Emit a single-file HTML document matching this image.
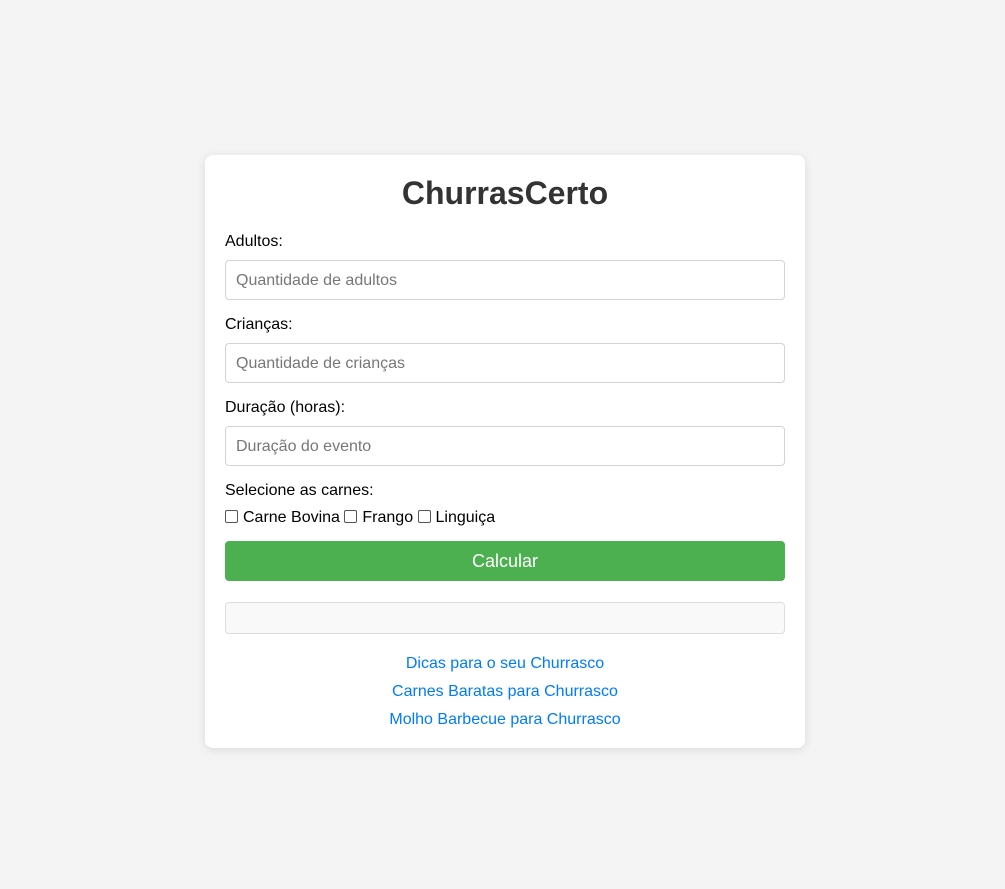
<!DOCTYPE html>
<html><head><meta charset="utf-8"><style>
body{margin:0;background:#f4f4f4;font-family:"Liberation Sans",Arial,sans-serif;width:1005px;height:889px;position:relative}
.card{position:absolute;left:205px;top:155px;width:600px;height:593px;background:#fff;border-radius:8px;box-shadow:0 2px 10px rgba(0,0,0,0.1)}
.a{position:absolute;left:20px;line-height:20px;font-size:16px;color:#000;white-space:nowrap}
h1{position:absolute;left:0;right:0;top:18px;margin:0;text-align:center;font-size:32px;line-height:40px;color:#333}
.in{position:absolute;left:20px;width:558px;height:38px;border:1px solid #d3d3d3;border-radius:4px;box-sizing:content-box;font-size:16px;color:#777;line-height:40px;text-indent:10px}
.cb{display:inline-block;width:11px;height:11px;border:1px solid #555;border-radius:2px;vertical-align:-1px;margin:0 5px 0 0}
.btn{position:absolute;left:20px;top:386px;width:560px;height:40px;background:#4caf50;border-radius:4px;color:#fff;font-size:18px;line-height:40px;text-align:center}
.res{position:absolute;left:20px;top:447px;width:558px;height:30px;background:#f9f9f9;border:1px solid #ddd;border-radius:4px}
.l{position:absolute;left:0;right:0;text-align:center;color:#007bff;font-size:16px;line-height:20px}
</style></head><body>
<div class="card">
<h1>ChurrasCerto</h1>
<div class="a" style="top:77px">Adultos:</div>
<div class="in" style="top:105px">Quantidade de adultos</div>
<div class="a" style="top:160px">Crianças:</div>
<div class="in" style="top:188px">Quantidade de crianças</div>
<div class="a" style="top:243px">Duração (horas):</div>
<div class="in" style="top:271px">Duração do evento</div>
<div class="a" style="top:326px">Selecione as carnes:</div>
<div class="a" style="top:353px"><span class="cb"></span>Carne Bovina <span class="cb"></span>Frango <span class="cb"></span>Linguiça</div>
<div class="btn">Calcular</div>
<div class="res"></div>
<div class="l" style="top:499px">Dicas para o seu Churrasco</div>
<div class="l" style="top:527px">Carnes Baratas para Churrasco</div>
<div class="l" style="top:555px">Molho Barbecue para Churrasco</div>
</div>
</body></html>
